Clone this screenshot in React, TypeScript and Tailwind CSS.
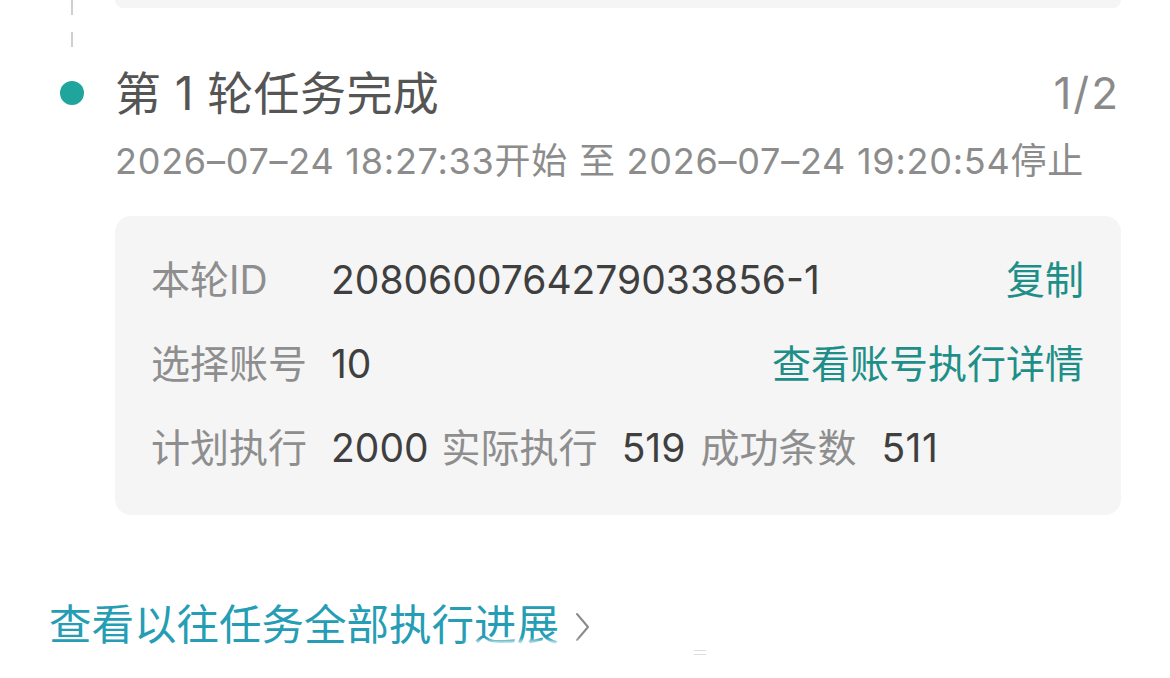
const font = { fontFamily: 'Inter, "Noto Sans CJK SC", sans-serif' };

/* ---------- timeline rail pieces ---------- */
const DashedRail = () => (
  <div className="flex flex-col gap-[17px] ml-[71px]">
    <div className="w-[2px] h-[15px] bg-[#cfcfcf]" />
    <div className="w-[2px] h-[15px] bg-[#cfcfcf]" />
  </div>
);

const Dot = () => (
  <div className="ml-[60px] w-[24px] h-[24px] rounded-full bg-[#1fa59b]" />
);

const Chevron = () => (
  <svg width="16" height="30" viewBox="0 0 16 30" className="ml-[16px] mt-[4px]">
    <polyline
      points="2,2 13,15 2,28"
      fill="none"
      stroke="#8a8a8a"
      strokeWidth="2"
      strokeLinecap="round"
      strokeLinejoin="round"
    />
  </svg>
);

export default function App() {
  return (
    <div
      className="relative w-[1170px] h-[678px] overflow-hidden bg-white text-[#4a4a4a]"
      style={font}
    >
      {/* tail of the previous round */}
      <div className="grid grid-cols-[115px_1fr] pr-[49px] h-[47px]">
        <DashedRail />
        <div className="h-[8px] bg-[#f5f5f5] rounded-b-2xl" />
      </div>

      {/* round 1 */}
      <div className="grid grid-cols-[115px_1fr] pr-[49px] mt-[18px]">
        <div className="flex items-center h-[56px]">
          <Dot />
        </div>
        <div className="flex items-center justify-between h-[56px]">
          <span className="text-[46px] text-[#555555] tracking-[0.4px]">
            第 1 轮任务完成
          </span>
          <span className="text-[44px] text-[#8a8a8a] tracking-[2px] mr-[1px]">1/2</span>
        </div>

        <div />
        <div className="mt-[18px] h-[44px] flex items-center text-[36px] tracking-[0.75px] text-[#8c8c8c] whitespace-nowrap">
          2026–07–24 18:27:33开始 至 2026–07–24 19:20:54停止
        </div>

        <div />
        <div className="mt-[33px] bg-[#f5f5f5] rounded-2xl pl-[36px] pr-[37px] pt-[38px] pb-[41px] flex flex-col gap-[32px] text-[39px]">
          <div className="flex items-center h-[52px]">
            <span className="w-[180px] text-[#8e8e8e]">本轮ID</span>
            <span className="text-[#3f3f3f]">2080600764279033856-1</span>
            <span className="ml-auto text-[#1e8f88]">复制</span>
          </div>
          <div className="flex items-center h-[52px]">
            <span className="w-[180px] text-[#8e8e8e]">选择账号</span>
            <span className="text-[#3f3f3f]">10</span>
            <span className="ml-auto text-[#1e8f88]">查看账号执行详情</span>
          </div>
          <div className="flex items-center h-[52px] whitespace-nowrap">
            <span className="w-[180px] text-[#8e8e8e]">计划执行</span>
            <span className="text-[#3f3f3f] mr-[13px]">2000</span>
            <span className="text-[#8e8e8e] mr-[24px]">实际执行</span>
            <span className="text-[#3f3f3f] mr-[15px]">519</span>
            <span className="text-[#8e8e8e] mr-[25px]">成功条数</span>
            <span className="text-[#3f3f3f] tracking-[0.5px]">511</span>
          </div>
        </div>
      </div>

      {/* history link */}
      <div className="mt-[84px] ml-[49px] h-[52px] flex items-center text-[42.5px] text-[#259db4]">
        <span>查看以往任务全部执行进展</span>
        <Chevron />
      </div>

      {/* faded watermark strip */}
      <div className="absolute left-[466px] top-[641px] w-[238px] h-[26px] bg-white/90 blur-[2px]" />
      <div className="absolute left-[694px] top-[650px] w-[12px] h-[1px] bg-[#dddddd]" />
      <div className="absolute left-[694px] top-[654px] w-[12px] h-[1px] bg-[#dddddd]" />
    </div>
  );
}
